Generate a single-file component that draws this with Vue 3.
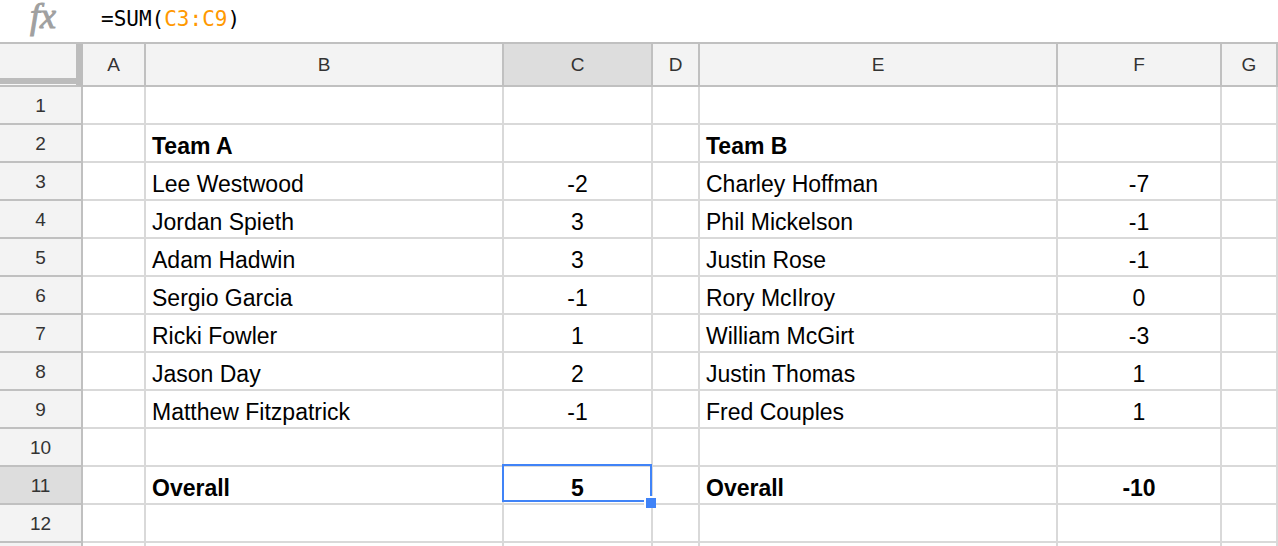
<script setup>
import { ref } from 'vue'

const columns = ['A', 'B', 'C', 'D', 'E', 'F', 'G']
const cells = {
  B2: 'Team A', E2: 'Team B',
  B3: 'Lee Westwood', C3: '-2', E3: 'Charley Hoffman', F3: '-7',
  B4: 'Jordan Spieth', C4: '3', E4: 'Phil Mickelson', F4: '-1',
  B5: 'Adam Hadwin', C5: '3', E5: 'Justin Rose', F5: '-1',
  B6: 'Sergio Garcia', C6: '-1', E6: 'Rory McIlroy', F6: '0',
  B7: 'Ricki Fowler', C7: '1', E7: 'William McGirt', F7: '-3',
  B8: 'Jason Day', C8: '2', E8: 'Justin Thomas', F8: '1',
  B9: 'Matthew Fitzpatrick', C9: '-1', E9: 'Fred Couples', F9: '1',
  B11: 'Overall', C11: '5', E11: 'Overall', F11: '-10',
}
const selected = ref({ col: 'C', row: 11 })
const boldRows = [2, 11]
const rowCount = 12

const isSelected = (col, row) => selected.value.col === col && selected.value.row === row
</script>

<template>
  <main class="sheet">
    <div class="formula-bar">
      <svg class="fx" viewBox="0 0 34 42" aria-hidden="true">
        <text x="4" y="28">fx</text>
      </svg>
      <div class="formula" role="textbox" aria-label="Formula" contenteditable="true" spellcheck="false">=SUM(<span class="range">C3:C9</span>)</div>
    </div>

    <table class="grid">
      <colgroup>
        <col class="w-head" />
        <col v-for="c in columns" :key="c" :class="'w-' + c.toLowerCase()" />
      </colgroup>
      <thead>
        <tr>
          <td class="corner"></td>
          <th v-for="c in columns" :key="c" scope="col" :class="{ active: c === selected.col }">{{ c }}</th>
        </tr>
      </thead>
      <tbody>
        <tr v-for="r in rowCount" :key="r" :class="{ bold: boldRows.includes(r) }">
          <th scope="row" :class="{ active: r === selected.row }">{{ r }}</th>
          <td
            v-for="c in columns"
            :key="c"
            :class="{ number: c === 'C' || c === 'F', selected: isSelected(c, r) }"
            @click="selected = { col: c, row: r }"
          >{{ cells[c + r] }}<span v-if="isSelected(c, r)" class="handle"></span></td>
        </tr>
        <tr>
          <th></th>
          <td v-for="c in columns" :key="c"></td>
        </tr>
      </tbody>
    </table>
  </main>
</template>

<style>
body {
  margin: 0;
  background: #fff;
}
</style>

<style scoped>
.sheet {
  height: 100vh;
  overflow: hidden;
  font-family: "Liberation Sans", Arial, Helvetica, sans-serif;
  color: #000;
}
.formula-bar {
  display: flex;
  align-items: flex-start;
  gap: 41px;
  height: 42px;
  padding: 0 26px;
  box-sizing: border-box;
}
.fx {
  width: 34px;
  height: 42px;
  overflow: visible;
  fill: #a0a0a0;
  stroke: #a0a0a0;
  stroke-width: 1;
  font-family: "Liberation Serif", serif;
  font-size: 36px;
  font-style: italic;
}
.formula {
  flex: 1;
  outline: none;
  font-family: "DejaVu Sans Mono", monospace;
  font-size: 21px;
  line-height: 38px;
}
.range {
  color: #ff9900;
}
.grid {
  width: 100%;
  table-layout: fixed;
  border-collapse: separate;
  border-spacing: 0;
  border-top: 2px solid #c0c0c0;
}
.w-head { width: 83px; }
.w-a { width: 63px; }
.w-b, .w-e { width: 358px; }
.w-c { width: 149px; }
.w-d { width: 47px; }
.w-f { width: 164px; }
.w-g { width: 56px; }

th,
td {
  box-sizing: border-box;
  height: 38px;
  padding: 0;
  border-right: 2px solid #d9d9d9;
  border-bottom: 2px solid #d9d9d9;
}
th {
  padding-top: 2px;
  background: #f3f3f3;
  border-color: #c0c0c0;
  color: #333;
  font-size: 19px;
  font-weight: 400;
  line-height: 24px;
  text-align: center;
}
thead th,
.corner {
  height: 43px;
  border-color: #c0c0c0;
}
thead th {
  padding-top: 0;
}
.corner {
  background: #f3f3f3;
  border-right: 7px solid #bcbcbc;
  border-bottom: 2px solid #c0c0c0;
  box-shadow: inset 0 -1px 0 #f8f8f8, inset 0 -7px 0 #bcbcbc;
}
th.active {
  background: #dddddd;
}
tbody td {
  position: relative;
  padding: 6px 6px 0;
  font-size: 23px;
  line-height: 30px;
  white-space: nowrap;
}
.number {
  text-align: center;
}
.bold td {
  font-weight: 700;
}
.selected::before {
  content: "";
  position: absolute;
  inset: -3px -1px 1px -2px;
  border: 2px solid #4083f7;
}
.handle {
  position: absolute;
  right: -5px;
  bottom: -5px;
  z-index: 1;
  width: 10px;
  height: 10px;
  border: 2px solid #fff;
  border-right: 0;
  border-bottom: 0;
  background: #4083f7;
}
</style>
